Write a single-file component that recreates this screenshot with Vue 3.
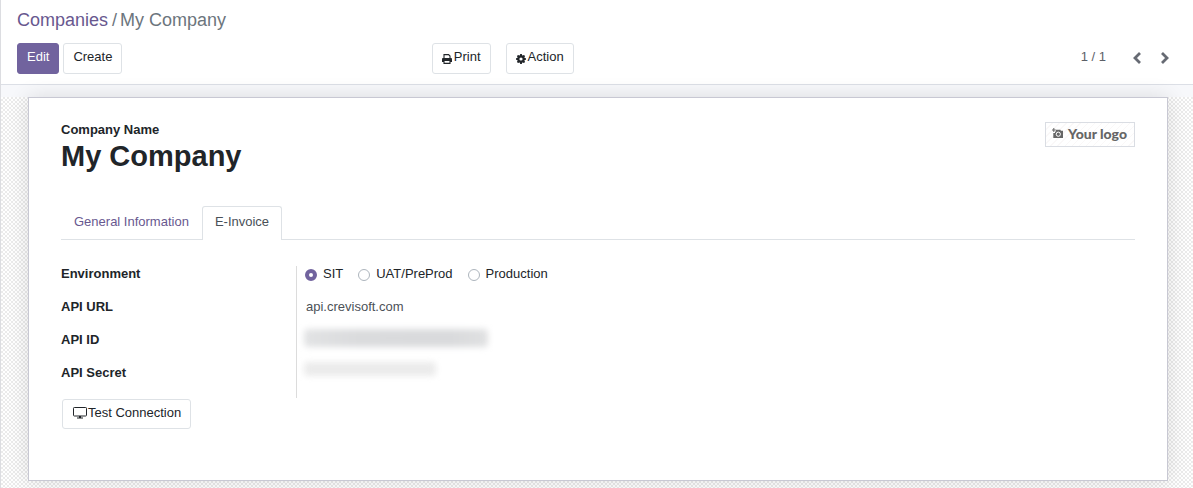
<script setup>
import { ref } from 'vue'

const environments = [
  { value: 'sit', label: 'SIT' },
  { value: 'uat', label: 'UAT/PreProd' },
  { value: 'production', label: 'Production' },
]
const environment = ref('sit')
</script>

<template>
  <div class="page">
    <header class="control-panel">
      <nav class="breadcrumb" aria-label="Breadcrumb">
        <a href="#">Companies</a><span class="slash">/</span><span>My Company</span>
      </nav>
      <div class="toolbar">
        <div class="left">
          <button class="btn primary" type="button">Edit</button>
          <button class="btn" type="button">Create</button>
        </div>
        <div class="middle">
          <button class="btn" type="button">
            <svg class="icon" width="10" height="10" viewBox="0 0 10 10" aria-hidden="true">
              <path d="M2 4.500V.6h4.600L8 2v2.500" fill="none" stroke="currentColor" stroke-width="1.100" />
              <path d="M1.200 4h7.600C9.500 4 10 4.500 10 5.200V8H0V5.200C0 4.500.5 4 1.200 4z" fill="currentColor" />
              <path d="M2 6.500h6v2.900H2z" fill="#fff" stroke="currentColor" stroke-width="1.100" />
            </svg>
            <span>Print</span>
          </button>
          <button class="btn" type="button">
            <svg class="icon" width="10" height="10" viewBox="0 0 10 10" aria-hidden="true">
              <path fill="currentColor" fill-rule="evenodd" d="M4.200 0h1.600l.3 1.300.6.250L7.900.9 9.100 2.100l-.65 1.200.25.600 1.300.3v1.600l-1.300.3-.25.600.65 1.200L7.900 9.100 6.700 8.450l-.6.250L5.800 10H4.200L3.900 8.700l-.6-.25L2.100 9.100.9 7.900l.65-1.200-.25-.6L0 5.800V4.200l1.300-.3.250-.6L.9 2.100 2.100.9l1.200.65.600-.25zM5 3.400a1.600 1.600 0 1 0 0 3.200 1.600 1.600 0 0 0 0-3.200z" />
            </svg>
            <span>Action</span>
          </button>
        </div>
        <div class="pager">
          <span>1 / 1</span>
          <button type="button" aria-label="Previous">
            <svg width="10" height="12" viewBox="0 0 10 12" aria-hidden="true"><path d="M8 1 3 6l5 5" fill="none" stroke="currentColor" stroke-width="2.800" /></svg>
          </button>
          <button type="button" aria-label="Next">
            <svg width="10" height="12" viewBox="0 0 10 12" aria-hidden="true"><path d="M2 1l5 5-5 5" fill="none" stroke="currentColor" stroke-width="2.800" /></svg>
          </button>
        </div>
      </div>
    </header>

    <main class="content">
      <section class="sheet">
        <div class="heading">
          <div>
            <div class="caption">Company Name</div>
            <h1>My Company</h1>
          </div>
          <button class="logo" type="button">
            <svg width="11" height="11" viewBox="0 0 11 11" aria-hidden="true">
              <path d="M4 1.800h4.300l.6.900H11V10H1.300V5H3V3.500h1z" fill="currentColor" />
              <path d="M1.800 0v4M0 2h3.800" stroke="currentColor" stroke-width="1" />
              <circle cx="6.300" cy="6.200" r="2.100" fill="none" stroke="#fff" stroke-width="1" />
            </svg>
            <span>Your logo</span>
          </button>
        </div>

        <div class="tabs" role="tablist">
          <button class="tab" type="button" role="tab" aria-selected="false">General Information</button>
          <button class="tab active" type="button" role="tab" aria-selected="true">E-Invoice</button>
        </div>

        <dl class="fields">
          <dt id="environment-label">Environment</dt>
          <dd class="radios" role="radiogroup" aria-labelledby="environment-label">
            <label v-for="item in environments" :key="item.value">
              <input v-model="environment" type="radio" name="environment" :value="item.value" />
              <span>{{ item.label }}</span>
            </label>
          </dd>
          <dt>API URL</dt>
          <dd>api.crevisoft.com</dd>
          <dt>API ID</dt>
          <dd><span class="masked id"></span></dd>
          <dt>API Secret</dt>
          <dd><span class="masked secret"></span></dd>
        </dl>

        <button class="btn test" type="button">
          <svg width="16" height="12" viewBox="0 0 16 12" aria-hidden="true">
            <rect x="1.500" y=".5" width="13" height="8.500" rx=".8" fill="none" stroke="currentColor" />
            <path d="M7 9h2v1.500h2v1H5v-1h2z" fill="currentColor" />
          </svg>
          <span>Test Connection</span>
        </button>
      </section>
    </main>
  </div>
</template>

<style>
body {
  margin: 0;
}
</style>

<style scoped>
.page {
  box-sizing: border-box;
  min-height: 100vh;
  display: flex;
  flex-direction: column;
  border-left: 1px solid #dcdde1;
  color: #212529;
  font: 13px/20px "Liberation Sans", Arial, sans-serif;
}
button {
  font: inherit;
  color: inherit;
  cursor: pointer;
}
.control-panel {
  padding: 8px 16px 10px;
  background: #fff;
  border-bottom: 1px solid #dcdfe6;
}
.breadcrumb {
  font-size: 18px;
  line-height: 24px;
  color: #6c757d;
}
.breadcrumb a {
  color: #68588f;
  text-decoration: none;
}
.slash {
  padding: 0 3px 0 4px;
}
.toolbar {
  display: grid;
  grid-template-columns: 11fr auto 16fr;
  align-items: center;
  margin-top: 11px;
}
.left {
  display: flex;
  gap: 4px;
}
.middle {
  display: flex;
  gap: 15px;
}
.btn {
  box-sizing: border-box;
  height: 31px;
  padding: 0 9px 3px;
  display: inline-flex;
  align-items: center;
  border: 1px solid #dee2e6;
  border-radius: 3px;
  background: #fff;
}
.btn.primary {
  background: #71639e;
  border-color: #71639e;
  color: #fff;
}
.icon {
  margin: 3px 2px 0 0;
}
.pager {
  display: flex;
  align-items: center;
  justify-content: flex-end;
  gap: 18px;
  padding: 0 7px 3px 0;
  color: #5c6067;
}
.pager span {
  margin-right: 8px;
}
.pager button {
  display: flex;
  padding: 2px 0 0;
  border: 0;
  background: none;
  color: #666a73;
}
.content {
  flex: 1;
  padding: 12px 25px 7px 27px;
  background:
    linear-gradient(#f7f8fb, #f7f8fb) top / 100% 12px no-repeat,
    repeating-conic-gradient(#ebebeb 0 25%, #fff 0 50%) 0 0 / 4px 4px;
}
.sheet {
  box-sizing: border-box;
  padding: 24px 32px 51px;
  background: #fff;
  border: 1px solid #c8c8d3;
  box-shadow: 0 0 20px rgba(0, 0, 0, 0.12);
}
.heading {
  display: flex;
  justify-content: space-between;
  align-items: flex-start;
}
.caption {
  line-height: 16px;
  font-weight: 700;
}
h1 {
  margin: 0;
  font-size: 29px;
  line-height: 36px;
  font-weight: 700;
}
.logo {
  box-sizing: border-box;
  height: 25px;
  display: flex;
  align-items: center;
  gap: 5px;
  padding: 0 7px 2px 6px;
  border: 1px solid #dadde3;
  background: repeating-linear-gradient(135deg, #fff 0 4px, #faf8f8 4px 5px);
  color: #666;
  font: 900 14px/16px Lato, sans-serif;
}
.tabs {
  display: flex;
  margin-top: 32px;
  border-bottom: 1px solid #dee2e6;
}
.tab {
  height: 34px;
  margin-bottom: -1px;
  padding: 0 12px 4px;
  border: 1px solid transparent;
  border-bottom: 0;
  border-radius: 3px 3px 0 0;
  background: none;
  color: #68588f;
}
.tab.active {
  background: #fff;
  border-color: #dee2e6;
  color: #495057;
}
.fields {
  display: grid;
  grid-template-columns: 235px 1fr;
  margin: 26px 0 0;
}
dt {
  height: 33px;
  line-height: 16px;
  font-weight: 700;
}
dd {
  margin: 0;
  padding-left: 9px;
  border-left: 1px solid #dcdcdc;
  line-height: 16px;
  color: #4c5157;
}
.radios {
  display: flex;
  align-items: flex-start;
  gap: 15px;
  padding-left: 8px;
  color: #212529;
}
.radios label {
  display: flex;
  gap: 6px;
}
.radios input {
  appearance: none;
  box-sizing: border-box;
  width: 12px;
  height: 12px;
  margin: 3px 0 0;
  border: 1px solid #adb5bd;
  border-radius: 50%;
  background: #fff;
}
.radios input:checked {
  border: 4px solid #71639e;
}
.masked {
  display: block;
  border-radius: 4px;
  filter: blur(3px);
}
.masked.id {
  width: 184px;
  height: 18px;
  margin: -3px 0 0 -2px;
  background: linear-gradient(90deg, #e2e3e4, #dadbdd 30%, #d9dadc 80%, #e0e1e2);
}
.masked.secret {
  width: 132px;
  height: 14px;
  margin: -3px 0 0 -2px;
  background: #ebebeb;
}
.test {
  height: 30px;
  margin: 1px 0 0 1px;
}
</style>
